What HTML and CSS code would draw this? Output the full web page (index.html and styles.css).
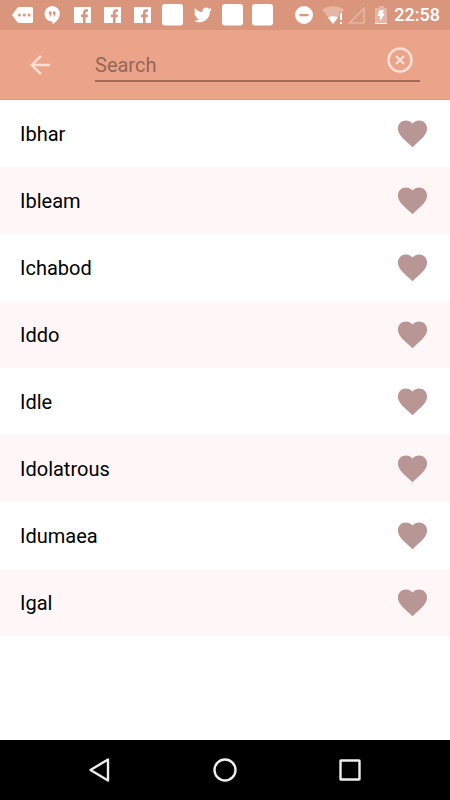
FILE: index.html
```html
<!DOCTYPE html>
<html lang="en">
<head>
<meta charset="utf-8">
<meta name="viewport" content="width=device-width, initial-scale=1">
<title>Names</title>
<link rel="stylesheet" href="styles.css">
</head>
<body>
<svg class="defs" aria-hidden="true">
  <symbol id="heart" viewBox="0 0 24 24"><path d="M12 21.35l-1.45-1.32C5.4 15.36 2 12.28 2 8.5 2 5.42 4.42 3 7.5 3c1.74 0 3.41.81 4.5 2.09C13.09 3.81 14.76 3 16.5 3 19.58 3 22 5.42 22 8.5c0 3.78-3.4 6.86-8.55 11.54L12 21.35z"/></symbol>
  <symbol id="facebook" viewBox="0 0 30 30"><path fill-rule="evenodd" d="M7 7H24V23H18.600V17.200H20.800V14.500H18.600V13Q18.600 11.700 19.800 11.700H21V9.200H19.200Q16 9.200 16 12.800V14.500H14V17.200H16V23H7Z"/></symbol>
  <symbol id="tile" viewBox="0 0 30 30"><rect x="5" y="4" width="21" height="21.500" rx="3"/></symbol>
</svg>
<div class="screen">
  <div class="status">
    <div class="notices">
      <svg viewBox="0 0 30 30"><path fill-rule="evenodd" d="M5 15L10 8.200Q11 7 12.500 7H24.500Q26 7 26 8.500V21.500Q26 23 24.500 23H12.500Q11 23 10 21.800ZM12.500 13.500a1.500 1.500 0 1 0 0 3a1.500 1.500 0 1 0 0-3ZM17.300 13.500a1.500 1.500 0 1 0 0 3a1.500 1.500 0 1 0 0-3ZM22.100 13.500a1.500 1.500 0 1 0 0 3a1.500 1.500 0 1 0 0-3Z"/></svg>
      <svg viewBox="0 0 30 30"><path fill-rule="evenodd" d="M15 6A7.800 7.800 0 0 1 22.800 13.800C22.800 18 19.500 22 15.500 24.300V21.600A7.800 7.800 0 0 1 15 6ZM11.800 11.500V14.500H13.300L12.300 16.500H13.500L14.500 14.500V11.500ZM15.800 11.500V14.500H17.300L16.300 16.500H17.500L18.500 14.500V11.500Z"/></svg>
      <svg><use href="#facebook"/></svg>
      <svg><use href="#facebook"/></svg>
      <svg><use href="#facebook"/></svg>
      <svg><use href="#tile"/></svg>
      <svg viewBox="-9 -8 40 40"><path d="M23.950 4.570a10 10 0 0 1-2.820.77 4.960 4.960 0 0 0 2.160-2.720c-.95.55-2 .95-3.130 1.180a4.920 4.920 0 0 0-8.380 4.480C7.690 8.090 4.070 6.130 1.640 3.160a4.820 4.820 0 0 0-.67 2.480c0 1.710.87 3.210 2.190 4.100a4.900 4.900 0 0 1-2.230-.62v.06a4.920 4.920 0 0 0 3.950 4.830 5 5 0 0 1-2.210.08 4.940 4.940 0 0 0 4.600 3.420A9.870 9.870 0 0 1 0 19.540a13.990 13.990 0 0 0 7.550 2.210c9.050 0 14-7.500 14-13.980l-.02-.64a9.940 9.940 0 0 0 2.420-2.560z"/></svg>
      <svg><use href="#tile"/></svg>
      <svg><use href="#tile"/></svg>
    </div>
    <div class="system">
      <svg viewBox="0 0 24 30"><path fill-rule="evenodd" d="M12 6a9 9 0 1 0 0 18a9 9 0 1 0 0-18ZM7.500 14V16.200H16.500V14Z"/></svg>
      <svg viewBox="0 0 24 30"><path class="faint" d="M12 24L1 9.500Q12 2.500 23 9.500L21 12H18V16Z"/><path d="M12 24L7 17.500Q12 15 17 17.500ZM19 13h2v7h-2ZM19 22h2v2h-2Z"/></svg>
      <svg viewBox="0 0 24 30"><path class="outline" d="M19 8.500V23H4.500Z"/></svg>
      <svg viewBox="0 0 24 30"><path class="faint" d="M10 6h5v2h3v16H6V8h4Z"/><path d="M10.500 10H15L13.500 13.500H16L11 21V16H8.500ZM6 23h12V24H6Z"/></svg>
      <time class="clock">22:58</time>
    </div>
  </div>
  <header class="toolbar">
    <button class="icon-button" type="button" aria-label="Back"><svg class="back" viewBox="0 0 24 24"><path d="M22 12H4M13 2.800L3.800 12L13 21.200"/></svg></button>
    <form class="search" role="search">
      <input class="field" type="text" placeholder="Search" aria-label="Search">
      <button class="icon-button" type="button" aria-label="Clear search"><svg class="clear" viewBox="0 0 26 26"><circle cx="13" cy="13" r="11.500"/><path d="M9 9L17 17M17 9L9 17"/></svg></button>
    </form>
  </header>
  <main>
    <ul class="names">
      <li><span>Ibhar</span><button class="icon-button" type="button" aria-label="Favourite Ibhar"><svg class="heart"><use href="#heart"/></svg></button></li>
      <li><span>Ibleam</span><button class="icon-button" type="button" aria-label="Favourite Ibleam"><svg class="heart"><use href="#heart"/></svg></button></li>
      <li><span>Ichabod</span><button class="icon-button" type="button" aria-label="Favourite Ichabod"><svg class="heart"><use href="#heart"/></svg></button></li>
      <li><span>Iddo</span><button class="icon-button" type="button" aria-label="Favourite Iddo"><svg class="heart"><use href="#heart"/></svg></button></li>
      <li><span>Idle</span><button class="icon-button" type="button" aria-label="Favourite Idle"><svg class="heart"><use href="#heart"/></svg></button></li>
      <li><span>Idolatrous</span><button class="icon-button" type="button" aria-label="Favourite Idolatrous"><svg class="heart"><use href="#heart"/></svg></button></li>
      <li><span>Idumaea</span><button class="icon-button" type="button" aria-label="Favourite Idumaea"><svg class="heart"><use href="#heart"/></svg></button></li>
      <li><span>Igal</span><button class="icon-button" type="button" aria-label="Favourite Igal"><svg class="heart"><use href="#heart"/></svg></button></li>
    </ul>
  </main>
  <nav class="navbar" aria-label="System">
    <button class="icon-button" type="button" aria-label="Back"><svg viewBox="0 0 26 26"><path d="M21 2.500V23.500L3.500 13Z"/></svg></button>
    <button class="icon-button" type="button" aria-label="Home"><svg viewBox="0 0 26 26"><circle cx="13" cy="13" r="10.500"/></svg></button>
    <button class="icon-button" type="button" aria-label="Recent apps"><svg viewBox="0 0 26 26"><rect x="3.500" y="3.500" width="19" height="19" rx="0.500"/></svg></button>
  </nav>
</div>
</body>
</html>
```

FILE: styles.css
```css
* {
  box-sizing: border-box;
}

body {
  margin: 0;
  background: #fff;
  color: #000;
  font-family: Roboto, "Liberation Sans", sans-serif;
  font-size: 20px;
}

.defs {
  display: none;
}

.screen {
  display: flex;
  flex-direction: column;
  min-height: 100vh;
}

.icon-button {
  display: flex;
  padding: 0;
  border: 0;
  background: none;
}

/* Status bar */
.status {
  display: flex;
  justify-content: space-between;
  height: 30px;
  padding: 0 10px 0 7px;
  background: #d9967d;
  color: #fff;
}

.notices,
.system {
  display: flex;
  align-items: center;
}

.notices svg {
  width: 30px;
  height: 30px;
  fill: #fff;
}

.system svg {
  width: 24px;
  height: 30px;
  fill: #fff;
}

.system svg:first-child {
  margin-right: 5px;
}

.system .faint {
  fill: #e6b5a3;
}

.system .outline {
  fill: none;
  stroke: #e6b5a3;
  stroke-width: 1.6;
}

.clock {
  margin-left: 1px;
  font-size: 18px;
  font-weight: 500;
  line-height: 30px;
}

/* Toolbar */
.toolbar {
  display: flex;
  align-items: center;
  gap: 43px;
  height: 70px;
  padding: 0 30px 0 28px;
  background: #eba389;
  border-bottom: 1px solid #e39b80;
}

.back {
  width: 24px;
  height: 24px;
  fill: none;
  stroke: #fbe0d7;
  stroke-width: 2.4;
}

.search {
  display: flex;
  flex: 1;
  align-items: flex-start;
  height: 35px;
  border-bottom: 2px solid #a26b58;
}

.field {
  flex: 1;
  min-width: 0;
  height: 35px;
  padding: 0;
  border: 0;
  outline: 0;
  background: none;
  color: #000;
  font: inherit;
}

.field::placeholder {
  color: #966756;
  opacity: 1;
}

.search .icon-button {
  margin-right: 7px;
}

.clear {
  width: 26px;
  height: 26px;
  fill: none;
  stroke: #fbe0d7;
  stroke-width: 2.4;
}

/* Name list */
main {
  flex: 1;
}

.names {
  margin: 0;
  padding: 0;
  list-style: none;
}

.names li {
  display: flex;
  align-items: center;
  justify-content: space-between;
  height: 67px;
  padding: 0 20px;
}

.names li:nth-child(even) {
  background: #fff6f7;
}

.heart {
  width: 35px;
  height: 35px;
  fill: #b89696;
}

/* Navigation bar */
.navbar {
  display: flex;
  align-items: center;
  justify-content: center;
  gap: 99px;
  height: 60px;
  background: #000;
}

.navbar svg {
  width: 26px;
  height: 26px;
  fill: none;
  stroke: #eee;
  stroke-width: 2.4;
  stroke-linejoin: round;
}
```
